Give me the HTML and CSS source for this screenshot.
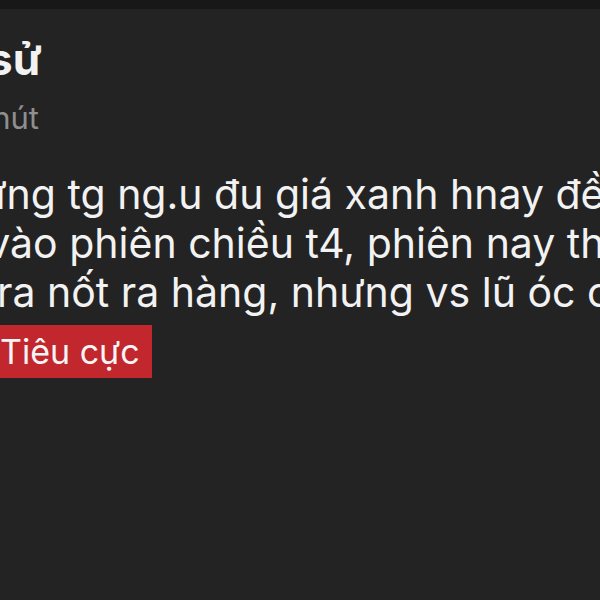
FILE: index.html
```html
<!DOCTYPE html>
<html lang="vi">
<head>
  <meta charset="UTF-8">
  <meta name="viewport" content="width=device-width, initial-scale=1.0">
  <title>Bình luận</title>
  <link rel="stylesheet" href="styles.css">
</head>
<body>

<div class="status-bar"></div>

<div class="post">
  <h1 class="post-title">Tà sử</h1>
  <div class="post-time">20 phút</div>
  <p class="post-body">Những tg ng.u đu giá xanh hnay đều<br>đổ vào phiên chiều t4, phiên nay thì<br>đợi ra nốt ra hàng, nhưng vs lũ óc chó</p>
  <span class="tag tag-negative">Tiêu cực</span>
</div>

</body>
</html>
```
FILE: styles.css
```css
body {
  margin: 0;
  background-color: #232323;
  font-family: Inter, "Noto Sans", sans-serif;
  color: #f2f2f2;
  overflow: hidden;
}

.status-bar {
  height: 9px;
  background-color: #181818;
}

.post {
  margin-left: -74px;
  padding-top: 20px;
  white-space: nowrap;
}

.post-title {
  margin: 0;
  font-size: 44px;
  font-weight: 700;
  line-height: 60px;
}

.post-time {
  margin-top: 9px;
  font-size: 31px;
  line-height: 40px;
  color: #8f8f8f;
}

.post-body {
  margin: 32px 0 8px;
  font-size: 41px;
  line-height: 49px;
}

.tag {
  display: inline-block;
  height: 53px;
  margin-left: 62px;
  padding: 0 12px;
  font-size: 34px;
  line-height: 53px;
}

.tag-negative {
  background-color: #c1272d;
  color: #f5f5f5;
}
```
